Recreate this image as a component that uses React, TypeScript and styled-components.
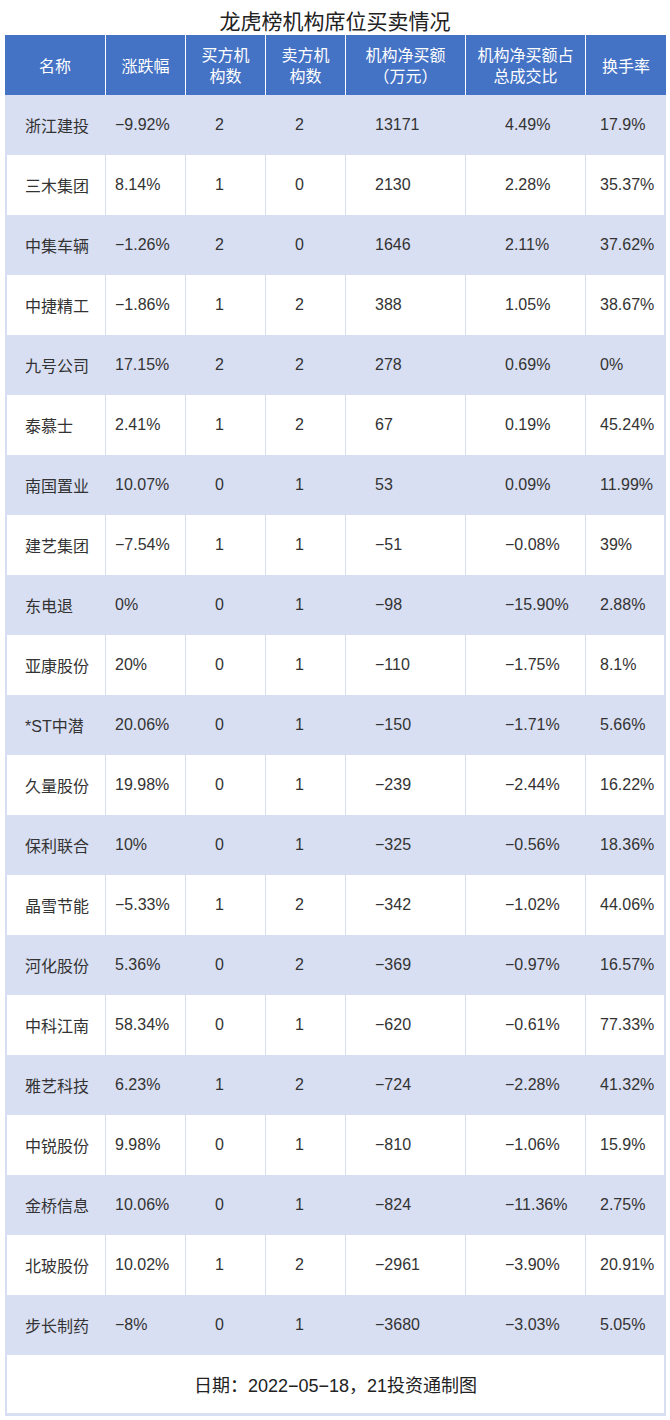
import React from "react";
import styled, { createGlobalStyle } from "styled-components";

const LAV = "#D9DFF2";
const BLUE = "#4472C4";

const Global = createGlobalStyle`
  html, body { margin: 0; padding: 0; background: #fff; }
  body { font-family: "Liberation Sans", "Noto Sans CJK SC", sans-serif; }
`;

const Page = styled.div`
  width: 670px;
  height: 1420px;
  background: #fff;
  box-sizing: border-box;
  padding: 0 4px 0 5px;
`;

const Title = styled.h1`
  margin: 0;
  height: 35px;
  box-sizing: border-box;
  padding-top: 9px;
  line-height: 25px;
  font-size: 21px;
  font-weight: 400;
  color: #222;
  text-align: center;
  margin-left: -5px;
  margin-right: -4px;
`;

const Table = styled.div`
  width: 661px;
  display: flex;
  flex-direction: column;
`;

const COLS = "100px 80px 80px 80px 120px 120px 81px";
const PADS = [20, 9, 29, 29, 29, 39, 14];

const HeaderRow = styled.div`
  display: grid;
  grid-template-columns: ${COLS};
  height: 60px;
  background: ${BLUE};
`;

const HeadCell = styled.div<{ $first?: boolean }>`
  display: flex;
  align-items: center;
  justify-content: center;
  text-align: center;
  box-sizing: border-box;
  border-left: ${(p) => (p.$first ? "none" : "1px solid #fff")};
  color: #fff;
  font-size: 16px;
  line-height: 21px;
  font-family: "Noto Sans CJK SC", sans-serif;
`;

const Row = styled.div<{ $shade: boolean }>`
  display: grid;
  grid-template-columns: ${COLS};
  height: 60px;
  background: ${(p) => (p.$shade ? LAV : "#fff")};
  box-shadow: inset 2px 0 0 ${LAV}, inset -2px 0 0 ${LAV};
`;

const Cell = styled.div<{ $pad: number; $first?: boolean }>`
  display: flex;
  align-items: center;
  box-sizing: border-box;
  padding-left: ${(p) => p.$pad}px;
  border-left: ${(p) => (p.$first ? "none" : `1px solid ${LAV}`)};
  color: #333;
  font-size: 16px;
  white-space: nowrap;
`;

const Footer = styled.div`
  height: 61px;
  box-sizing: border-box;
  border: 2px solid ${LAV};
  border-top: none;
  border-bottom-width: 3px;
  display: flex;
  align-items: center;
  justify-content: center;
  font-size: 18px;
  color: #222;
`;

const M = "\u2212";

const headers: React.ReactNode[] = [
  "名称",
  "涨跌幅",
  <>买方机<br />构数</>,
  <>卖方机<br />构数</>,
  <>机构净买额<br />（万元）</>,
  <>机构净买额占<br />总成交比</>,
  "换手率",
];

const data: string[][] = [
  ["浙江建投", `${M}9.92%`, "2", "2", "13171", "4.49%", "17.9%"],
  ["三木集团", "8.14%", "1", "0", "2130", "2.28%", "35.37%"],
  ["中集车辆", `${M}1.26%`, "2", "0", "1646", "2.11%", "37.62%"],
  ["中捷精工", `${M}1.86%`, "1", "2", "388", "1.05%", "38.67%"],
  ["九号公司", "17.15%", "2", "2", "278", "0.69%", "0%"],
  ["泰慕士", "2.41%", "1", "2", "67", "0.19%", "45.24%"],
  ["南国置业", "10.07%", "0", "1", "53", "0.09%", "11.99%"],
  ["建艺集团", `${M}7.54%`, "1", "1", `${M}51`, `${M}0.08%`, "39%"],
  ["东电退", "0%", "0", "1", `${M}98`, `${M}15.90%`, "2.88%"],
  ["亚康股份", "20%", "0", "1", `${M}110`, `${M}1.75%`, "8.1%"],
  ["*ST中潜", "20.06%", "0", "1", `${M}150`, `${M}1.71%`, "5.66%"],
  ["久量股份", "19.98%", "0", "1", `${M}239`, `${M}2.44%`, "16.22%"],
  ["保利联合", "10%", "0", "1", `${M}325`, `${M}0.56%`, "18.36%"],
  ["晶雪节能", `${M}5.33%`, "1", "2", `${M}342`, `${M}1.02%`, "44.06%"],
  ["河化股份", "5.36%", "0", "2", `${M}369`, `${M}0.97%`, "16.57%"],
  ["中科江南", "58.34%", "0", "1", `${M}620`, `${M}0.61%`, "77.33%"],
  ["雅艺科技", "6.23%", "1", "2", `${M}724`, `${M}2.28%`, "41.32%"],
  ["中锐股份", "9.98%", "0", "1", `${M}810`, `${M}1.06%`, "15.9%"],
  ["金桥信息", "10.06%", "0", "1", `${M}824`, `${M}11.36%`, "2.75%"],
  ["北玻股份", "10.02%", "1", "2", `${M}2961`, `${M}3.90%`, "20.91%"],
  ["步长制药", `${M}8%`, "0", "1", `${M}3680`, `${M}3.03%`, "5.05%"],
];

export default function App() {
  return (
    <>
      <Global />
      <Page>
        <Title>龙虎榜机构席位买卖情况</Title>
        <Table>
          <HeaderRow>
            {headers.map((h, i) => (
              <HeadCell key={i} $first={i === 0}>
                {h}
              </HeadCell>
            ))}
          </HeaderRow>
          {data.map((r, ri) => (
            <Row key={ri} $shade={ri % 2 === 0}>
              {r.map((c, ci) => (
                <Cell key={ci} $pad={PADS[ci]} $first={ci === 0}>
                  {c}
                </Cell>
              ))}
            </Row>
          ))}
          <Footer>日期：2022{M}05{M}18，21投资通制图</Footer>
        </Table>
      </Page>
    </>
  );
}
